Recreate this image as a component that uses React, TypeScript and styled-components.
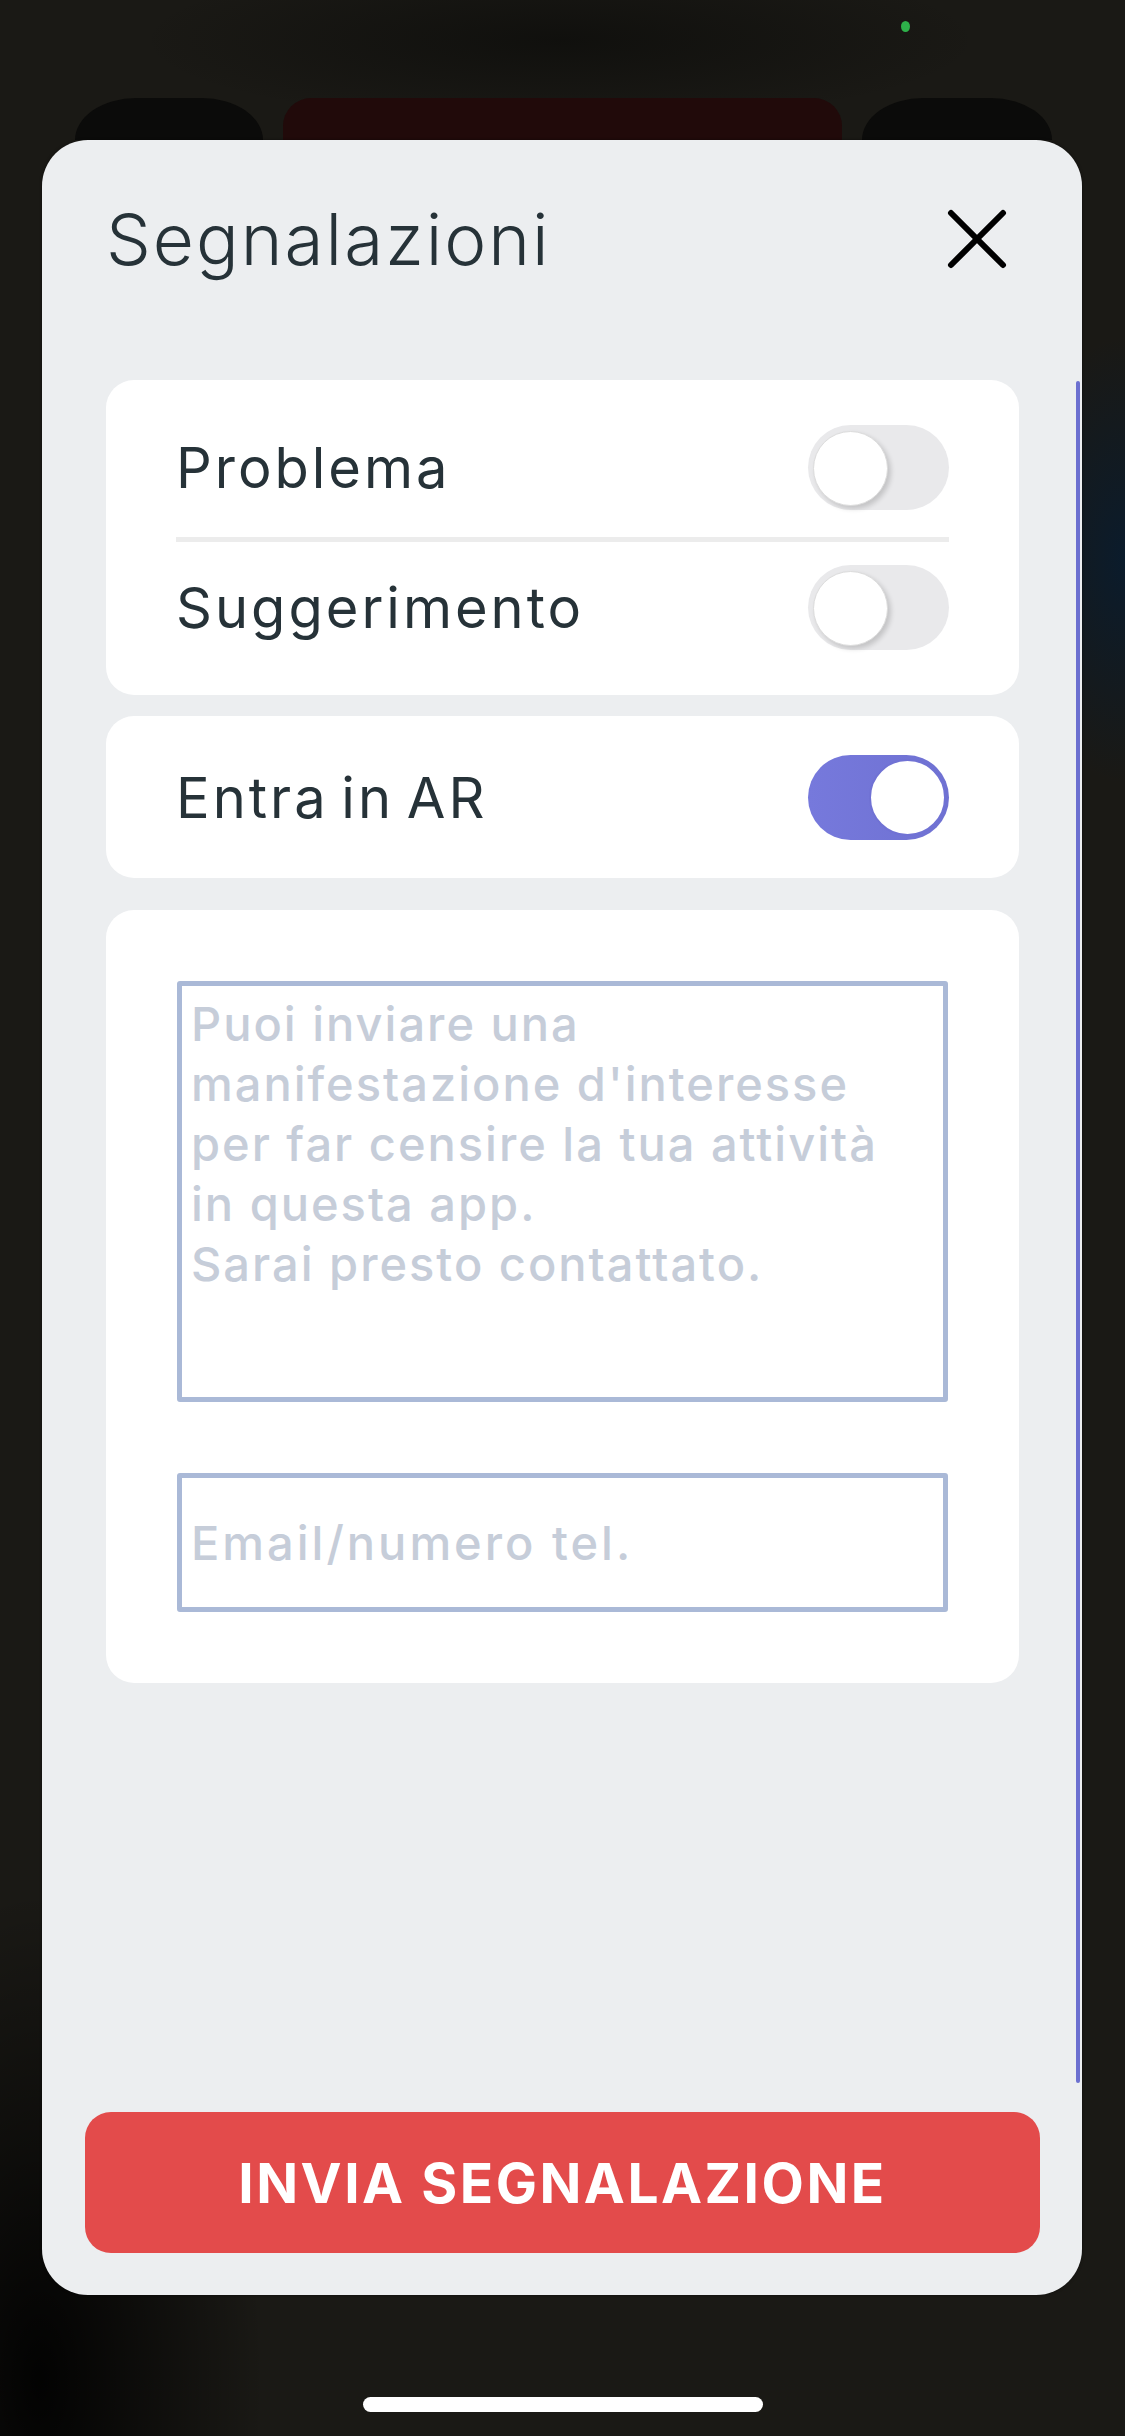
import React, { useState } from "react";
import styled, { createGlobalStyle } from "styled-components";

const GlobalStyle = createGlobalStyle`
  * {
    box-sizing: border-box;
  }
  body {
    margin: 0;
    background: #1a1915;
    font-family: Inter, "Noto Sans", sans-serif;
  }
`;

const Screen = styled.div`
  width: 1125px;
  height: 2436px;
  overflow: hidden;
  display: flex;
  flex-direction: column;
  background:
    radial-gradient(ellipse 320px 700px at 40px 2380px, rgba(0, 0, 0, 0.9), transparent 70%),
    radial-gradient(ellipse 160px 320px at 1125px 560px, rgba(8, 28, 48, 0.85), transparent 70%),
    radial-gradient(ellipse 600px 120px at 560px 40px, rgba(12, 12, 10, 0.7), transparent 70%),
    #1a1915;
`;

const StatusBar = styled.div`
  height: 98px;
  padding: 21px 0 0 901px;
`;

const CameraDot = styled.div`
  width: 9px;
  height: 11px;
  border-radius: 50%;
  background: #2eb14a;
`;

const BehindRow = styled.div`
  height: 42px;
  display: grid;
  grid-template-columns: 188px 559px 190px;
  column-gap: 20px;
  padding-left: 75px;
`;

const BehindTab = styled.div<{ $tone: string; $round: string }>`
  background: ${({ $tone }) => $tone};
  border-radius: ${({ $round }) => $round};
`;

const Sheet = styled.section`
  margin: 0 43px 0 42px;
  height: 2155px;
  border-radius: 46px;
  background: #eceef0;
  display: flex;
  flex-direction: column;
  padding-bottom: 42px;
  box-shadow: 0 0 3px rgba(0, 0, 0, 0.5);
`;

const Header = styled.header`
  height: 240px;
  padding: 0 75px 42px 64px;
  display: flex;
  align-items: center;
  justify-content: space-between;
  flex-shrink: 0;
`;

const Title = styled.h1`
  margin: 0;
  font-size: 71px;
  font-weight: 300;
  line-height: 1;
  color: #263238;
  letter-spacing: 2px;
`;

const CloseButton = styled.button`
  width: 60px;
  height: 60px;
  padding: 0;
  border: none;
  background: none;
  display: flex;
`;

const ScrollArea = styled.div`
  flex: 1;
  position: relative;
  padding: 0 63px 0 64px;
  display: flex;
  flex-direction: column;
  min-height: 0;
`;

const ScrollThumb = styled.div`
  position: absolute;
  top: 1px;
  bottom: 0;
  right: 2px;
  width: 4px;
  border-radius: 2px;
  background: #6c70d0;
`;

const Card = styled.div<{ $pad: string; $above?: number }>`
  background: #ffffff;
  border-radius: 28px;
  padding: ${({ $pad }) => $pad};
  margin-top: ${({ $above }) => $above ?? 0}px;
  display: flex;
  flex-direction: column;
`;

const ToggleRow = styled.div`
  height: 85px;
  display: flex;
  align-items: center;
  justify-content: space-between;
`;

const Label = styled.span`
  font-size: 56px;
  font-weight: 400;
  color: #263238;
  letter-spacing: 3px;
  word-spacing: -6px;
`;

const Divider = styled.div`
  height: 5px;
  background: #ececec;
  margin: 27px 0 23px;
`;

const SwitchTrack = styled.button<{ $on: boolean }>`
  position: relative;
  width: 141px;
  height: 85px;
  padding: 0;
  border: none;
  border-radius: 43px;
  background: ${({ $on }) =>
    $on ? "linear-gradient(90deg, #7679dc, #6f71d2)" : "#e9e9eb"};
  cursor: pointer;
`;

const SwitchKnob = styled.span<{ $on: boolean }>`
  position: absolute;
  top: ${({ $on }) => ($on ? 4 : 6)}px;
  left: ${({ $on }) => ($on ? 61 : 5)}px;
  width: ${({ $on }) => ($on ? 77 : 75)}px;
  height: ${({ $on }) => ($on ? 77 : 75)}px;
  border-radius: 50%;
  background: #ffffff;
  border: ${({ $on }) => ($on ? "2px solid #7072d4" : "1px solid #dcdcdc")};
  box-shadow: ${({ $on }) =>
    $on ? "none" : "3px 3px 5px rgba(0, 0, 0, 0.16)"};
`;

const NoteArea = styled.textarea`
  width: 100%;
  height: 421px;
  border: 5px solid #aab9d7;
  border-radius: 3px;
  padding: 8px 9px;
  font-family: Inter, "Noto Sans", sans-serif;
  font-size: 47px;
  font-weight: 500;
  line-height: 60px;
  letter-spacing: 2px;
  color: #263238;
  resize: none;
  outline: none;
  &::placeholder {
    color: #c6cdd9;
    opacity: 1;
  }
`;

const ContactInput = styled.input`
  width: 100%;
  height: 139px;
  margin-top: 71px;
  border: 5px solid #aab9d7;
  border-radius: 3px;
  padding: 0 9px;
  font-family: Inter, "Noto Sans", sans-serif;
  font-size: 47px;
  font-weight: 500;
  letter-spacing: 3px;
  color: #263238;
  outline: none;
  &::placeholder {
    color: #c6cdd9;
    opacity: 1;
  }
`;

const SendButton = styled.button`
  margin: 29px 42px 0 43px;
  height: 141px;
  flex-shrink: 0;
  border: none;
  border-radius: 26px;
  background: #e34b4b;
  color: #ffffff;
  font-family: Inter, "Noto Sans", sans-serif;
  font-size: 55px;
  font-weight: 700;
  letter-spacing: 2.5px;
  cursor: pointer;
`;

const HomeIndicator = styled.div`
  width: 400px;
  height: 15px;
  margin: 102px auto 0;
  border-radius: 8px;
  background: #ffffff;
`;

function Switch({ on, onToggle }: { on: boolean; onToggle: () => void }) {
  return (
    <SwitchTrack $on={on} onClick={onToggle} aria-pressed={on}>
      <SwitchKnob $on={on} />
    </SwitchTrack>
  );
}

const placeholder =
  "Puoi inviare una\nmanifestazione d'interesse\nper far censire la tua attività\nin questa app.\nSarai presto contattato.";

export default function App() {
  const [problem, setProblem] = useState(false);
  const [hint, setHint] = useState(false);
  const [ar, setAr] = useState(true);

  return (
    <Screen>
      <GlobalStyle />
      <StatusBar>
        <CameraDot />
      </StatusBar>
      <BehindRow>
        <BehindTab $tone="#0b0b0a" $round="70px 70px 0 0 / 48px 48px 0 0" />
        <BehindTab $tone="#210a0a" $round="28px 28px 0 0" />
        <BehindTab $tone="#0b0b0a" $round="70px 70px 0 0 / 48px 48px 0 0" />
      </BehindRow>
      <Sheet>
        <Header>
          <Title>Segnalazioni</Title>
          <CloseButton aria-label="Chiudi">
            <svg width="60" height="60" viewBox="0 0 60 60">
              <path
                d="M4 4 L56 56 M56 4 L4 56"
                stroke="#000"
                strokeWidth="6"
                strokeLinecap="round"
                fill="none"
              />
            </svg>
          </CloseButton>
        </Header>
        <ScrollArea>
          <Card $pad="45px 70px">
            <ToggleRow>
              <Label>Problema</Label>
              <Switch on={problem} onToggle={() => setProblem(!problem)} />
            </ToggleRow>
            <Divider />
            <ToggleRow>
              <Label>Suggerimento</Label>
              <Switch on={hint} onToggle={() => setHint(!hint)} />
            </ToggleRow>
          </Card>
          <Card $pad="39px 70px 38px" $above={21}>
            <ToggleRow>
              <Label>Entra in AR</Label>
              <Switch on={ar} onToggle={() => setAr(!ar)} />
            </ToggleRow>
          </Card>
          <Card $pad="71px" $above={32}>
            <NoteArea placeholder={placeholder} />
            <ContactInput placeholder="Email/numero tel." />
          </Card>
          <ScrollThumb />
        </ScrollArea>
        <SendButton>INVIA SEGNALAZIONE</SendButton>
      </Sheet>
      <HomeIndicator />
    </Screen>
  );
}
